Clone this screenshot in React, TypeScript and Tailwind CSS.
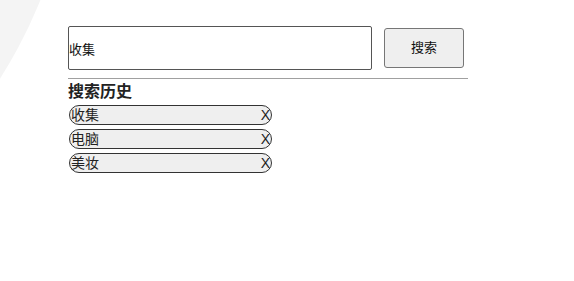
const history = ["收集", "电脑", "美妆"];

export default function App() {
  return (
    <div
      className="relative w-[574px] h-[281px] overflow-hidden bg-white text-[#111]"
      style={{ fontFamily: '"Liberation Sans", "Noto Sans CJK SC", sans-serif' }}
    >
      {/* background arc */}
      <div className="absolute left-[-885px] top-[-659px] w-[960px] h-[960px] rounded-full bg-[#f4f4f4]" />

      <div className="relative pl-[68px] pt-[26px]">
        <div className="flex items-start">
          <input
            defaultValue="收集"
            className="w-[304px] h-[44px] border border-[#555] rounded-[2px] bg-white px-0 text-[13px] outline-none"
          />
          <button className="ml-[12px] mt-[2px] w-[80px] h-[40px] bg-[#efefef] border border-[#767676] rounded-[3px] text-[13px]">
            搜索
          </button>
        </div>

        <div className="mt-[8px] w-[400px] border-t border-[#a0a0a0]" />

        <h3 className="mt-[2px] text-[16px] leading-[22px] font-semibold text-[#222]">搜索历史</h3>

        <div className="mt-[2px] flex flex-col gap-[4px]">
          {history.map((item) => (
            <div
              key={item}
              className="ml-[1px] w-[203px] h-[20px] flex items-center justify-between border border-[#333] rounded-full bg-[#efefef] pl-[1px] pr-[1px] text-[14px] leading-none text-[#222]"
            >
              <span>{item}</span>
              <span>X</span>
            </div>
          ))}
        </div>
      </div>
    </div>
  );
}
